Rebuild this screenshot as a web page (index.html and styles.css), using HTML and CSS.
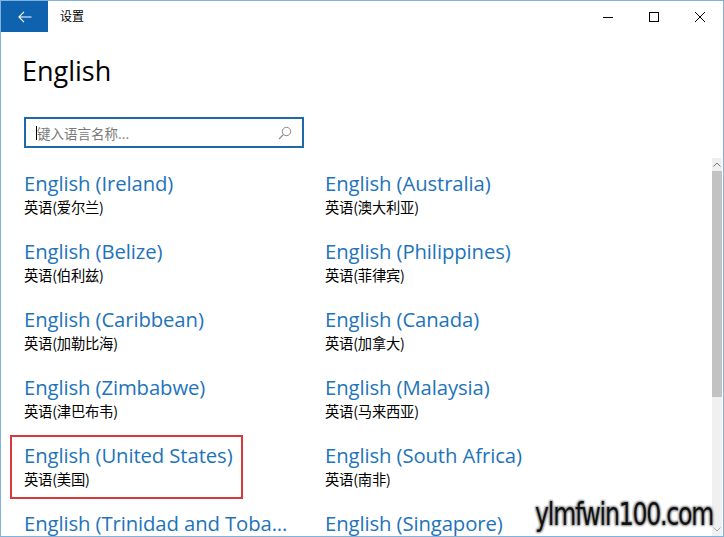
FILE: index.html
```html
<!DOCTYPE html>
<html lang="zh">
<head>
<meta charset="utf-8">
<title>设置</title>
<link rel="stylesheet" href="styles.css">
</head>
<body>
<div class="window">
  <div class="titlebar">
    <div class="back">
      <svg width="14" height="12" viewBox="0 0 14 12"><path d="M6 0.8 L0.9 6 L6 11.2 M0.9 6 H13.5" fill="none" stroke="#fff" stroke-width="1.1"/></svg>
    </div>
    <div class="title">设置</div>
    <div class="caps">
      <div class="cap"><svg width="10" height="10" viewBox="0 0 10 10"><path d="M0 5.5 H10" stroke="#000" stroke-width="1"/></svg></div>
      <div class="cap"><svg width="10" height="10" viewBox="0 0 10 10"><rect x="0.5" y="0.5" width="9" height="9" fill="none" stroke="#000" stroke-width="1"/></svg></div>
      <div class="cap"><svg width="10" height="10" viewBox="0 0 10 10"><path d="M0 0 L10 10 M10 0 L0 10" stroke="#000" stroke-width="1"/></svg></div>
    </div>
  </div>
  <div class="content">
    <h1 class="heading">English</h1>
    <div class="search">
      <span class="caret"></span>
      <span class="placeholder">键入语言名称...</span>
      <svg class="search-icon" width="14" height="14" viewBox="0 0 14 14"><circle cx="8.5" cy="5.5" r="4.2" fill="none" stroke="#8a8a8a" stroke-width="1"/><path d="M5.5 8.5 L1 13" stroke="#8a8a8a" stroke-width="1.1"/></svg>
    </div>
    <div class="listarea">
      <div class="list">
        <div class="item"><div class="name">English (Ireland)</div><div class="sub">英语(爱尔兰)</div></div>
        <div class="item"><div class="name">English (Australia)</div><div class="sub">英语(澳大利亚)</div></div>
        <div class="item"><div class="name">English (Belize)</div><div class="sub">英语(伯利兹)</div></div>
        <div class="item"><div class="name">English (Philippines)</div><div class="sub">英语(菲律宾)</div></div>
        <div class="item"><div class="name">English (Caribbean)</div><div class="sub">英语(加勒比海)</div></div>
        <div class="item"><div class="name">English (Canada)</div><div class="sub">英语(加拿大)</div></div>
        <div class="item"><div class="name">English (Zimbabwe)</div><div class="sub">英语(津巴布韦)</div></div>
        <div class="item"><div class="name">English (Malaysia)</div><div class="sub">英语(马来西亚)</div></div>
        <div class="item selected"><div class="name">English (United States)</div><div class="sub">英语(美国)</div></div>
        <div class="item"><div class="name">English (South Africa)</div><div class="sub">英语(南非)</div></div>
        <div class="item"><div class="name">English (Trinidad and Toba...</div></div>
        <div class="item"><div class="name">English (Singapore)</div></div>
      </div>
      <div class="scrollbar">
        <div class="arrow up">
          <svg width="8" height="5" viewBox="0 0 8 5"><path d="M0.5 4.5 L4 1 L7.5 4.5" fill="none" stroke="#777" stroke-width="1"/></svg>
        </div>
        <div class="thumb"></div>
        <div class="track"></div>
        <div class="arrow down">
          <svg width="8" height="5" viewBox="0 0 8 5"><path d="M0.5 0.5 L4 4 L7.5 0.5" fill="none" stroke="#aaa" stroke-width="1"/></svg>
        </div>
      </div>
    </div>
  </div>
  <div class="watermark">ylmfwin100.com</div>
</div>
</body>
</html>
```
FILE: styles.css
```css
* { box-sizing: border-box; }
html, body { margin: 0; padding: 0; background: #fff; }
body { width: 724px; height: 537px; overflow: hidden; font-family: "Open Sans", "Noto Sans CJK SC", sans-serif; }
.window {
  position: relative;
  width: 724px;
  height: 537px;
  border: 1px solid #7fb2dd;
  display: flex;
  flex-direction: column;
  overflow: hidden;
}
.titlebar { height: 31px; display: flex; align-items: center; flex: none; }
.back { width: 47px; height: 31px; background: #0f62ad; display: flex; align-items: center; justify-content: center; }
.title { margin-left: 12px; font-size: 12px; font-family: "Noto Sans CJK SC", sans-serif; color: #000; margin-bottom: 3px; }
.caps { margin-left: auto; display: flex; }
.cap { width: 46px; height: 31px; display: flex; align-items: center; justify-content: center; }
.content { flex: 1; display: flex; flex-direction: column; min-height: 0; }
.heading {
  margin: 21px 0 0 21px;
  font-size: 27px;
  font-weight: 400;
  line-height: 36px;
  color: #000;
  font-family: "Open Sans", sans-serif;
}
.search {
  margin: 28px 0 0 23px;
  width: 280px;
  height: 31px;
  border: 2px solid #1e6aa8;
  display: flex;
  align-items: center;
  padding-left: 10px;
  padding-right: 10px;
  flex: none;
}
.caret { width: 1px; height: 14px; background: #000; }
.placeholder { font-family: "Noto Sans CJK SC", sans-serif; font-size: 13.5px; color: #7a7a7a; }
.search-icon { margin-left: auto; }
.listarea { flex: 1; display: flex; margin-top: 10px; min-height: 0; }
.list {
  flex: 1;
  display: grid;
  grid-template-columns: 301px 301px;
  grid-auto-rows: 68px;
  padding: 12px 0 0 23px;
  align-content: start;
  overflow: hidden;
}
.item { position: relative; }
.name { font-size: 20.3px; line-height: 26px; color: #1d74bb; white-space: nowrap; letter-spacing: -0.1px; }
.sub { font-family: "Noto Sans CJK SC", sans-serif; font-size: 14.3px; line-height: 21px; color: #000; letter-spacing: -0.2px; }
.selected::after {
  content: "";
  position: absolute;
  left: -14px;
  top: -7px;
  width: 229px;
  height: 60px;
  border: 2px solid #d8393d;
}
.scrollbar { width: 10px; margin-right: 1px; display: flex; flex-direction: column; flex: none; }
.arrow { height: 13px; background: #f0f0f0; display: flex; align-items: center; justify-content: center; flex: none; }
.thumb { height: 226px; background: #c2c2c2; flex: none; }
.track { flex: 1; background: #f0f0f0; }
.watermark {
  position: absolute;
  right: 10px;
  bottom: 3px;
  font-family: "DejaVu Sans Condensed", "DejaVu Sans", sans-serif;
  font-size: 32px;
  letter-spacing: -1.5px;
  color: #111;
  transform: scaleX(0.82);
  transform-origin: right center;
  text-shadow: 0 0 2px #999, 1px 1px 2px #aaa, -1px -1px 2px #aaa, 1px -1px 2px #aaa, -1px 1px 2px #aaa;
}
```
